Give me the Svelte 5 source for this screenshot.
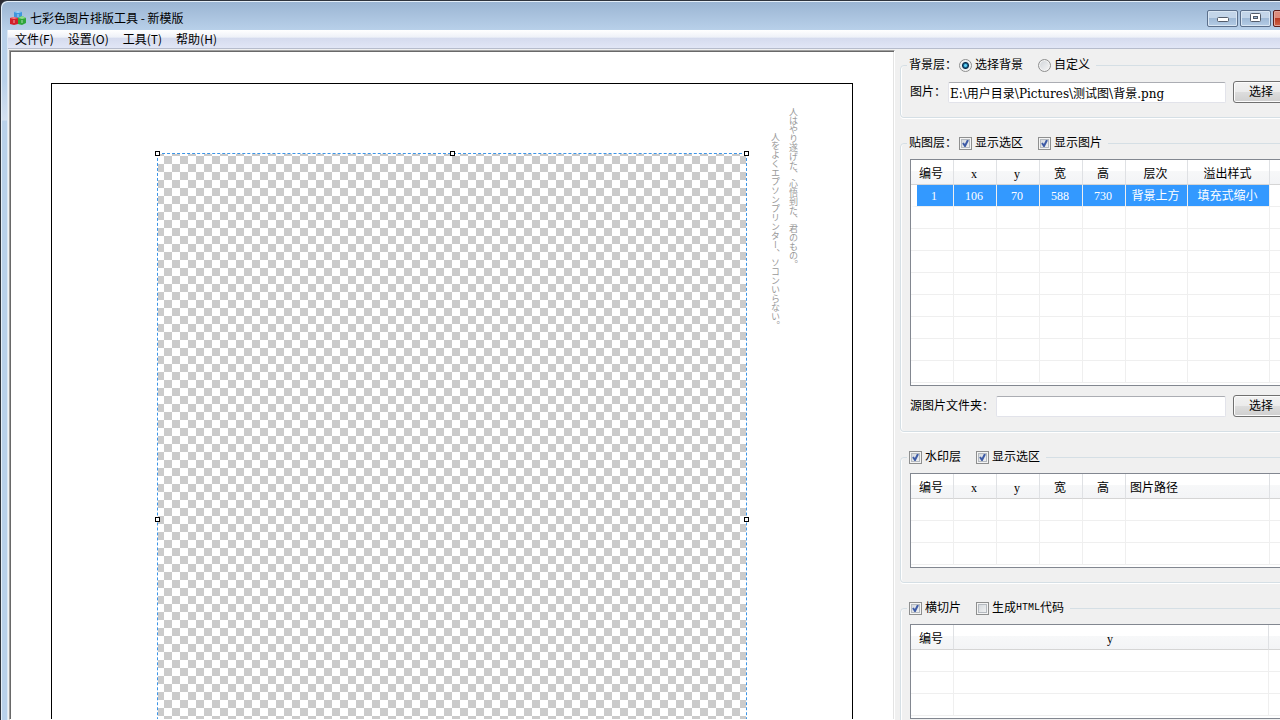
<script>
  let background = $state('pick')
  let imagePath = $state('E:\\用户目录\\Pictures\\测试图\\背景.png')
  let sourceFolder = $state('')
  let showArea = $state(true)
  let showImage = $state(true)
  let watermark = $state(true)
  let showWatermarkArea = $state(true)
  let slices = $state(true)
  let makeHtml = $state(false)

  const menus = ['文件(F)', '设置(O)', '工具(T)', '帮助(H)']
  const handles = ['nw', 'n', 'ne', 'w', 'e', 'sw', 's', 'se']

  const imageTable = {
    columns: ['编号', 'x', 'y', '宽', '高', '层次', '溢出样式', ''],
    widths: [43, 43, 43, 43, 43, 62, 82],
    rows: [['1', '106', '70', '588', '730', '背景上方', '填充式缩小', '']],
    count: 9
  }
  const markTable = {
    columns: ['编号', 'x', 'y', '宽', '高', '图片路径', ''],
    widths: [43, 43, 43, 43, 43, 144],
    rows: [],
    count: 3
  }
  const sliceTable = {
    columns: ['编号', 'y', ''],
    widths: [43, 315],
    rows: [],
    count: 3
  }
</script>

{#snippet grid(table)}
  <div class="list">
    <table>
      <colgroup>
        {#each table.widths as width}
          <col style="width: {width}px" />
        {/each}
        <col />
      </colgroup>
      <thead>
        <tr>
          {#each table.columns as column}
            <th class:left={column === '图片路径'}>{column}</th>
          {/each}
        </tr>
      </thead>
      <tbody>
        {#each { length: table.count } as _, i}
          <tr class:selected={table.rows[i]}>
            {#each table.columns as _, j}
              <td>{table.rows[i]?.[j] ?? ''}</td>
            {/each}
          </tr>
        {/each}
      </tbody>
    </table>
  </div>
{/snippet}

<div class="screen">
  <div class="window">
    <header class="titlebar">
      <svg class="logo" width="16" height="16" viewBox="0 0 16 16">
        <path d="M4 2l4-1 4 1v7H4z" fill="#3f97dc" />
        <path d="M4 2l4-1 4 1-4 1z" fill="#a5d5f7" />
        <path d="M0 8l4-1 4 1v6l-4 1-4-1z" fill="#d3202a" />
        <path d="M0 8l4-1 4 1-4 1z" fill="#f2838a" />
        <path d="M8 8l4-2 4 2v5l-4 2-4-1z" fill="#2fa53a" />
        <path d="M8 8l4-2 4 2-4 1z" fill="#8fdc8c" />
        <path d="M8 4v3M4 10v3M12 10v3" stroke="#fff" stroke-opacity=".6" />
      </svg>
      <h1>七彩色图片排版工具 - 新模版</h1>
      <div class="controls">
        <button aria-label="最小化">
          <svg width="12" height="10" viewBox="0 0 12 10">
            <rect x=".5" y="4.5" width="11" height="4" rx="1" fill="#fff" stroke="#535c6b" />
          </svg>
        </button>
        <button aria-label="最大化">
          <svg width="12" height="10" viewBox="0 0 12 10">
            <rect x=".5" y=".5" width="10" height="8" rx="1" fill="#fff" stroke="#535c6b" />
            <rect x="3.5" y="3.5" width="4" height="2" fill="#9db9d8" stroke="#535c6b" />
          </svg>
        </button>
        <button class="close" aria-label="关闭"></button>
      </div>
    </header>

    <div class="frame">
      <nav class="menubar">
        {#each menus as menu}
          <button>{menu}</button>
        {/each}
      </nav>

      <div class="content">
        <main class="canvas">
          <div class="paper">
            <div class="poem">
              <p>人はやり遂げた、心悟到た、君のもの。</p>
              <p class="second">人をよくエプソンプリンター、ソコンいらない。</p>
            </div>
            <div class="selection">
              {#each handles as handle}
                <span class="handle {handle}"></span>
              {/each}
            </div>
          </div>
        </main>

        <aside class="panel">
          <fieldset>
            <legend>
              <span class="title">背景层：</span>
              <label><input type="radio" value="pick" bind:group={background} />选择背景</label>
              <label><input type="radio" value="custom" bind:group={background} />自定义</label>
            </legend>
            <div class="row">
              <label for="image-path">图片：</label>
              <input id="image-path" type="text" bind:value={imagePath} />
              <button class="pick">选择</button>
            </div>
          </fieldset>

          <fieldset>
            <legend>
              <span class="title">贴图层：</span>
              <label><input type="checkbox" bind:checked={showArea} />显示选区</label>
              <label><input type="checkbox" bind:checked={showImage} />显示图片</label>
            </legend>
            {@render grid(imageTable)}
            <div class="row folder">
              <label for="source-folder">源图片文件夹：</label>
              <input id="source-folder" type="text" bind:value={sourceFolder} />
              <button class="pick">选择</button>
            </div>
          </fieldset>

          <fieldset>
            <legend>
              <label><input type="checkbox" bind:checked={watermark} />水印层</label>
              <label><input type="checkbox" bind:checked={showWatermarkArea} />显示选区</label>
            </legend>
            {@render grid(markTable)}
          </fieldset>

          <fieldset>
            <legend>
              <label><input type="checkbox" bind:checked={slices} />横切片</label>
              <label><input type="checkbox" bind:checked={makeHtml} />生成<span class="mono">HTML</span>代码</label>
            </legend>
            {@render grid(sliceTable)}
          </fieldset>
        </aside>
      </div>
    </div>
  </div>
</div>

<style>
  :global(body) {
    margin: 0;
  }

  .screen {
    height: 100vh;
    overflow: hidden;
    background: #2b2b33;
    font: 12px/16px "Liberation Serif", "Noto Sans CJK SC", serif;
    color: #000;
  }

  /* the window runs past the right edge of the screen */
  .window {
    display: flex;
    flex-direction: column;
    height: 100%;
    margin-right: -25px;
    box-sizing: border-box;
    border: 1px solid #2f343d;
    border-bottom: 0;
    border-radius: 7px 0 0 0;
    box-shadow: inset 1px 1px #e4eef8;
    background: linear-gradient(#9ab4d2, #b9d1ea 30px, #b9d1ea 80px, #d5e1f0 119px, #b9d1ea 120px);
  }

  .titlebar {
    display: flex;
    align-items: center;
    height: 29px;
    flex: none;
    padding: 5px 0 0 9px;
    box-sizing: border-box;
  }

  h1 {
    flex: 1;
    margin: 0 0 0 4px;
    font: 12px/16px "Noto Sans CJK SC", sans-serif;
  }

  .controls {
    display: flex;
    gap: 2px;
  }

  .controls button {
    display: flex;
    align-items: center;
    justify-content: center;
    width: 31px;
    height: 17px;
    padding: 0;
    border: 1px solid #5b6f8b;
    border-radius: 2px;
    box-shadow: inset 0 0 0 1px #d9e6f3;
    background: linear-gradient(#c3d5e9 50%, #9fb9d6 50%, #b5cde6);
  }

  .controls .close {
    border-color: #5c1d1a;
    box-shadow: inset 0 0 0 1px #e0a79c;
    background: linear-gradient(#dd8c7c 50%, #b83a22 50%, #cf6448);
  }

  .frame {
    display: flex;
    flex-direction: column;
    flex: 1;
    min-height: 0;
    margin-left: 7px;
    box-shadow: -1px 0 #dce8f5;
    background: #f0f0f0;
  }

  .menubar {
    display: flex;
    flex: none;
    height: 18px;
    border-bottom: 1px solid #b6bccc;
    background: linear-gradient(#fff, #eef1f8 40%, #d5dbee 45%, #e1e6f6);
  }

  .menubar button {
    padding: 0 7px;
    border: 0;
    background: none;
    font: 12px/18px "Noto Sans CJK SC", sans-serif;
  }

  .content {
    display: flex;
    flex: 1;
    min-height: 0;
    padding: 1px 0 0 1px;
  }

  .canvas {
    flex: 1;
    min-width: 0;
    overflow: hidden;
    padding: 31px 40px;
    border: 1px solid;
    border-color: #a0a0a0 #fff #fff #a0a0a0;
    box-shadow: inset 1px 1px #696969, inset -1px 0 #e3e3e3;
    background: #fff;
    box-sizing: border-box;
  }

  .paper {
    position: relative;
    width: 800px;
    height: 1130px;
    margin: 1px 0 0 1px;
    border: 1px solid #000;
  }

  .poem {
    position: absolute;
    top: 23px;
    right: 50px;
    writing-mode: vertical-rl;
    font: 9px/18px "Noto Sans CJK JP", sans-serif;
    color: #999;
  }

  .poem p {
    margin: 0;
  }

  .poem .second {
    margin-top: 25px;
  }

  .selection {
    position: absolute;
    left: 105px;
    top: 69px;
    width: 588px;
    height: 730px;
    border: 1px dashed #3d95e6;
    background: conic-gradient(#fff 25%, #cbcbcb 0 50%, #fff 0 75%, #cbcbcb 0) -2px -6px / 16px 16px padding-box;
  }

  .handle {
    position: absolute;
    width: 3px;
    height: 3px;
    margin: -3px;
    border: 1px solid #000;
    background: #fff;
  }

  .nw, .n, .ne { top: 0; }
  .w, .e { top: 50%; margin-top: -2px; }
  .sw, .s, .se { top: 100%; margin-top: -2px; }
  .nw, .w, .sw { left: 0; }
  .n, .s { left: 50%; margin-left: -2px; }
  .ne, .e, .se { left: 100%; margin-left: -2px; }

  .panel {
    display: flex;
    flex-direction: column;
    flex: none;
    gap: 16px;
    width: 409px;
    padding: 6px 0 0 5px;
    box-sizing: border-box;
  }

  fieldset {
    min-width: 0;
    margin: 0;
    padding: 7px 14px 14px 9px;
    border: 1px solid #d5dfe5;
    border-radius: 4px;
    box-shadow: inset 1px 0 #fff, 0 1px #fff;
  }

  legend {
    display: flex;
    align-items: center;
    height: 18px;
    margin-left: -3px;
    padding: 0 6px 0 2px;
  }

  legend label {
    display: flex;
    align-items: center;
    margin-right: 15px;
  }

  legend label:last-child {
    margin-right: 0;
  }

  legend .title {
    width: 50px;
  }

  .mono {
    font: 10px/16px "Liberation Mono", monospace;
  }

  input[type='checkbox'],
  input[type='radio'] {
    appearance: none;
    width: 13px;
    height: 13px;
    margin: 0 3px 0 0;
    border: 1px solid #8e8f8f;
    box-shadow: inset 0 0 0 1px #f4f4f4, inset 0 0 0 2px #b5bac0;
    background: linear-gradient(135deg, #cfd4d9, #f6f6f6) center;
  }

  input[type='checkbox']:checked {
    background: url("data:image/svg+xml,%3Csvg xmlns='http://www.w3.org/2000/svg' viewBox='0 0 11 11'%3E%3Cpath d='M3 5l2 3 3-6' fill='none' stroke='%233d5ba6' stroke-width='2'/%3E%3C/svg%3E"), linear-gradient(135deg, #cfd4d9, #f6f6f6);
  }

  input[type='radio'] {
    border-radius: 50%;
    box-shadow: inset 0 0 0 1px #f4f4f4;
  }

  input[type='radio']:checked {
    background: radial-gradient(circle at 50% 50%, #5fd0f2 1px, #17618f 2px, #0b2c48 3px, #e8ecef 4px);
  }

  .row {
    display: flex;
    align-items: center;
  }

  .row label {
    width: 38px;
  }

  .row.folder {
    margin-top: 9px;
  }

  .row.folder label {
    width: 86px;
  }

  .row input {
    flex: 1;
    min-width: 0;
    height: 21px;
    margin-right: 7px;
    padding: 0 1px;
    border: 1px solid #e2e3ea;
    border-top-color: #abadb3;
    border-radius: 2px;
    box-sizing: border-box;
    background: #fff;
    font: 12px/16px "DejaVu Serif", "Noto Sans CJK SC", serif;
  }

  .pick {
    width: 56px;
    height: 22px;
    padding: 0;
    border: 1px solid #707070;
    border-radius: 3px;
    box-shadow: inset 0 0 0 1px #fcfcfc;
    background: linear-gradient(#f2f2f2, #ebebeb 50%, #dddddd 50%, #cfcfcf);
    font: inherit;
  }

  .list {
    padding-bottom: 2px;
    border: 1px solid #828790;
    background: #fff;
  }

  table {
    width: 100%;
    table-layout: fixed;
    border-collapse: separate;
    border-spacing: 0;
  }

  th,
  td {
    height: 21px;
    padding: 0 2px 0 0;
    border-right: 1px solid #efefef;
    border-bottom: 1px solid #efefef;
    text-align: center;
    font-weight: normal;
    line-height: 16px;
    white-space: nowrap;
  }

  th {
    padding-top: 3px;
    border-color: #dfe1e4;
    border-bottom-color: #d5d5d5;
    background: linear-gradient(#fff 45%, #f7f8f9 46%, #f3f4f6);
  }

  th.left {
    padding-left: 4px;
    text-align: left;
  }

  .selected td:not(:last-child) {
    background: #3399ff;
    color: #fff;
  }

  .selected td:first-child {
    border-left: 6px solid #fff;
  }
</style>
